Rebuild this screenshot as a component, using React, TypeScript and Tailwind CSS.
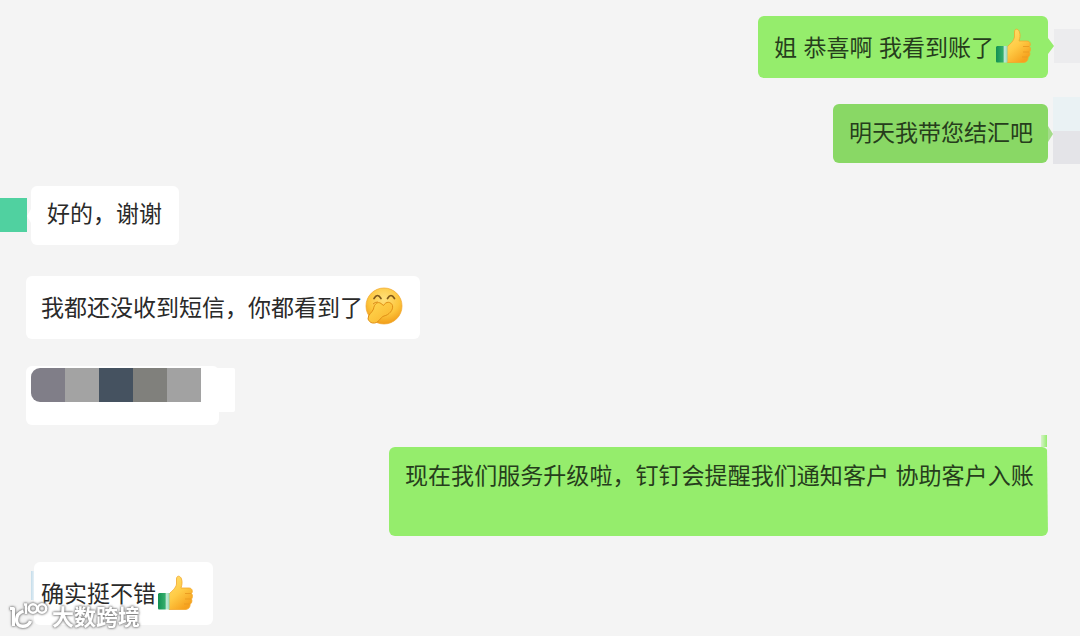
import type { ReactNode } from 'react';

interface BubbleProps {
  children?: ReactNode;
  className?: string;
}

function Bubble({ children, className = '' }: BubbleProps) {
  return (
    <div className={`flex shrink-0 items-center rounded-[6px] whitespace-pre ${className}`}>
      {children}
    </div>
  );
}

function ThumbsUp() {
  return (
    <svg viewBox="0 0 36 36" className="-mt-[2px] ml-px h-9 w-9 shrink-0">
      <defs>
        <linearGradient id="hand" x1="0" y1="0" x2="0.6" y2="1">
          <stop offset="0" stopColor="#ffdf70" />
          <stop offset="0.55" stopColor="#ffcb45" />
          <stop offset="1" stopColor="#f6a11d" />
        </linearGradient>
        <linearGradient id="cuff" x1="0" y1="0" x2="1" y2="0">
          <stop offset="0" stopColor="#129052" />
          <stop offset="0.6" stopColor="#33ad6b" />
          <stop offset="0.75" stopColor="#c3ebd9" />
          <stop offset="1" stopColor="#8fd5b3" />
        </linearGradient>
      </defs>
      <path
        d="M12 19 C15 16 19 13 19.5 9 V4 C19.5 0 23.5 0.5 24.5 4 C25.5 7 25 10 24 13 H32 C35.5 13 36 17 34.5 18.5 C36 20 35.5 23 34.5 24 C35.5 26 34.5 29 33 29 C33.5 32 31.5 34.5 28 34.5 H12 Z"
        fill="url(#hand)"
        stroke="#f3a72b"
        strokeWidth="0.8"
      />
      <path d="M28 18.5 H34 M28 24 H34 M27 29 H32.5" stroke="#e99b20" strokeWidth="0.9" fill="none" />
      <path d="M2 18 H12.5 V34.5 H2 Q1 34.5 1 33 V19 Z" fill="url(#cuff)" />
    </svg>
  );
}

function Giggle() {
  return (
    <svg viewBox="0 0 38 38" className="-mt-[3px] ml-[2px] h-[38px] w-[38px] shrink-0">
      <defs>
        <radialGradient id="face" cx="0.5" cy="0.3" r="0.72">
          <stop offset="0" stopColor="#ffe07a" />
          <stop offset="0.6" stopColor="#fdc63c" />
          <stop offset="1" stopColor="#f09a17" />
        </radialGradient>
        <linearGradient id="palm" x1="0" y1="0" x2="1" y2="1">
          <stop offset="0" stopColor="#ffd952" />
          <stop offset="1" stopColor="#fab32b" />
        </linearGradient>
      </defs>
      <circle cx="19" cy="19" r="18" fill="url(#face)" stroke="#f0a62e" strokeWidth="0.7" />
      <path
        d="M9 11.5 Q12.5 5.5 16 11.5 M22.5 11.5 Q26 5.5 29.5 11.5"
        stroke="#80591a"
        strokeWidth="1.7"
        strokeLinecap="round"
        fill="none"
      />
      <path d="M8 17 Q10 15 13 15" stroke="#d98a1b" strokeWidth="1" fill="none" />
      <path
        d="M3 32 C3 27 7 26 8.5 22 C9 17 13 14 16 16.5 L18.5 18.5 C21 14 26 14.5 27.5 18.5 C28.5 23 24 28 19 29 C15 30 14 37 7.5 36 C5 35.5 4 34 3 32 Z"
        fill="url(#palm)"
        stroke="#e08f16"
        strokeWidth="1"
      />
    </svg>
  );
}

function Watermark() {
  return (
    <div className="absolute top-[600px] left-[8px] flex items-start text-white [filter:drop-shadow(0_0_1px_#777)_drop-shadow(0_0_1px_#999)]">
      <svg viewBox="0 0 42 30" className="h-[30px] w-[42px]" fill="none" stroke="white">
        <path d="M2 8.5 H5.5 V26" strokeWidth="3" strokeLinejoin="round" />
        <path d="M22.5 21 C20.5 28 8.5 28.5 8.5 20 C8.5 15.5 11 12.5 15.5 11" strokeWidth="3.4" />
        <path d="M16 4.5 H18 V14" strokeWidth="2.4" />
        <circle cx="25" cy="8.5" r="4.2" strokeWidth="2.5" />
        <circle cx="34" cy="8.5" r="4.2" strokeWidth="2.5" />
      </svg>
      <span className="mt-[2px] ml-[2px] text-[22px] leading-[26px] font-bold">大数跨境</span>
    </div>
  );
}

export default function App() {
  return (
    <main className="relative flex h-[636px] w-[1080px] flex-col overflow-hidden bg-[#f4f4f4] pt-4 font-['Noto_Sans_CJK_SC',sans-serif] text-[23px] leading-[30px] text-[#2a2a2a] [word-spacing:1.3px]">
      <div className="flex h-[62px] justify-end">
        <Bubble className="h-[62px] w-[290px] bg-[#95ed6c] pl-4 text-[#263d1c]">
          <span className="-mt-[3px]">姐 恭喜啊 我看到账了</span>
          <ThumbsUp />
        </Bubble>
        <svg viewBox="0 0 6 16" className="mt-[22px] h-4 w-[6px]">
          <path d="M0 0 L6 8 L0 16 Z" fill="#95ed6c" />
        </svg>
        <div className="mt-[13px] h-[34px] w-[26px] bg-[#ececee]" />
      </div>

      <div className="mt-[19px] flex h-[67px] items-start justify-end">
        <Bubble className="mt-[7px] h-[59px] w-[215px] bg-[#89d865] pl-4 text-[#263d1c]">
          <span className="-mt-[6px]">明天我带您结汇吧</span>
        </Bubble>
        <svg viewBox="0 0 5 16" className="mt-[29px] h-4 w-[5px]">
          <path d="M0 0 L5 8 L0 16 Z" fill="#a4dc8a" />
        </svg>
        <div className="w-[27px]">
          <div className="h-[34px] bg-[#eaf2f4]" />
          <div className="h-[33px] bg-[#e4e4e8]" />
        </div>
      </div>

      <div className="mt-[22px] flex h-[59px]">
        <div className="mt-3 h-[34px] w-[27px] bg-[#50d1a0]" />
        <svg viewBox="0 0 4 14" className="mt-[23px] h-[14px] w-1">
          <path d="M4 0 L0 7 L4 14 Z" fill="#fff" />
        </svg>
        <Bubble className="h-[59px] w-[148px] bg-white pl-4">
          <span className="-mt-[7px]">好的，谢谢</span>
        </Bubble>
      </div>

      <div className="mt-[31px] flex h-[63px] pl-[26px]">
        <Bubble className="h-[63px] w-[394px] bg-white pl-[15px]">
          <span className="-mt-1">我都还没收到短信，你都看到了</span>
          <Giggle />
        </Bubble>
      </div>

      {/* Redacted message */}
      <div className="mt-[27px] flex h-[59px] pl-[26px]">
        <div className="h-[59px] w-[193px] rounded-[6px] bg-white pt-[2px] pl-[5px]">
          <div className="flex h-[34px] w-[170px] overflow-hidden rounded-l-[9px]">
            <div className="flex-1 bg-[#807e88]" />
            <div className="flex-1 bg-[#a3a3a3]" />
            <div className="flex-1 bg-[#455260]" />
            <div className="flex-1 bg-[#80807c]" />
            <div className="flex-1 bg-[#a2a2a2]" />
          </div>
        </div>
        <div className="mt-[2px] -ml-2 h-11 w-6 rounded-r-[2px] bg-white" />
      </div>

      <div className="mt-[10px] flex flex-col items-end pr-8">
        <div className="mr-px h-3 w-[6px] bg-linear-to-r from-[#d8f2ca] to-[#95ed6c]" />
        <Bubble className="h-[89px] w-[659px] bg-[#95ed6c] pl-4 text-[#263d1c] [clip-path:polygon(0_0,658px_0,100%_100%,0_100%)]">
          <span className="-mt-[35px] text-[23.05px]">现在我们服务升级啦，钉钉会提醒我们通知客户 协助客户入账</span>
        </Bubble>
      </div>

      <div className="mt-[26px] flex h-[63px] pl-[31px]">
        <div className="mt-[9px] h-[29px] w-[3px] bg-linear-to-r from-[#c3dcea] to-[#e6f0f6]" />
        <Bubble className="h-[63px] w-[179px] bg-white pl-[7px]">
          <span className="-mt-[4px]">确实挺不错</span>
          <ThumbsUp />
        </Bubble>
      </div>

      <Watermark />
    </main>
  );
}
